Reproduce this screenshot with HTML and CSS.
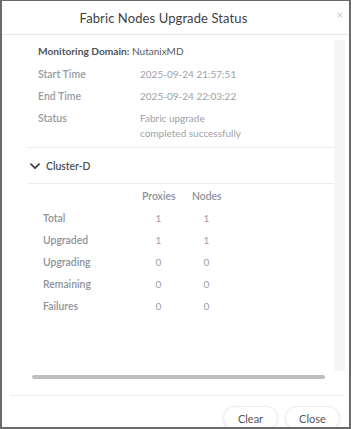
FILE: index.html
```html
<!DOCTYPE html>
<html>
<head>
<meta charset="utf-8">
<link rel="stylesheet" href="styles.css">
</head>
<body>
<div class="modal">
  <div class="header">
    <div class="title">Fabric Nodes Upgrade Status</div>
    <div class="close-x">×</div>
  </div>
  <div class="body">
    <div class="scroller">
      <div class="content">
        <div class="info">
          <div class="domain"><b>Monitoring Domain:</b> NutanixMD</div>
          <div class="row"><span class="lbl">Start Time</span><span class="val">2025-09-24 21:57:51</span></div>
          <div class="row"><span class="lbl">End Time</span><span class="val">2025-09-24 22:03:22</span></div>
          <div class="row"><span class="lbl">Status</span><span class="val">Fabric upgrade<br>completed successfully</span></div>
        </div>
        <div class="cluster">
          <svg class="chev" width="10" height="7" viewBox="0 0 10 7"><path d="M1 1.2 L5 5.2 L9 1.2" fill="none" stroke="#444" stroke-width="1.8" stroke-linecap="round" stroke-linejoin="round"/></svg>
          <span>Cluster-D</span>
        </div>
        <div class="grid">
          <div></div><div class="h">Proxies</div><div class="h">Nodes</div>
          <div class="l">Total</div><div class="n">1</div><div class="n">1</div>
          <div class="l">Upgraded</div><div class="n">1</div><div class="n">1</div>
          <div class="l">Upgrading</div><div class="n">0</div><div class="n">0</div>
          <div class="l">Remaining</div><div class="n">0</div><div class="n">0</div>
          <div class="l">Failures</div><div class="n">0</div><div class="n">0</div>
        </div>
      </div>
      <div class="vtrack"></div>
    </div>
    <div class="hbar"><div class="thumb"></div></div>
  </div>
  <div class="footer">
    <button class="btn">Clear</button>
    <button class="btn">Close</button>
  </div>
</div>
</body>
</html>
```

FILE: styles.css
```css
* { box-sizing: border-box; }
html, body { margin: 0; padding: 0; background: #fff; }
body { font-family: "Lato", "Open Sans", sans-serif; }
.modal {
  width: 351px;
  height: 429px;
  border: 2px solid #6a6a6a;
  border-top-width: 1px;
  display: flex;
  flex-direction: column;
  background: #fff;
  overflow: hidden;
}
.header {
  height: 34px;
  border-bottom: 1px solid #e8e8e8;
  display: flex;
  align-items: center;
  justify-content: center;
  position: relative;
  flex: none;
}
.title {
  font-size: 13px;
  color: #3f3f3f;
  letter-spacing: 0.1px;
  margin-right: 24px;
  margin-top: 1px;
}
.close-x {
  position: absolute;
  right: 6px;
  top: 7px;
  font-size: 11px;
  color: #c8c8c8;
}
.body {
  padding: 5px 4px 0 26px;
  flex: none;
}
.scroller {
  display: flex;
  height: 331px;
}
.content {
  flex: 1;
  background: #fff;
}
.vtrack {
  width: 11px;
  background: #f5f5f5;
}
.info {
  padding: 4px 0 0 10px;
  height: 108px;
  border-bottom: 1px solid #ececec;
}
.domain {
  color: #555a60;
  height: 22.5px;
  line-height: 15px;
  font-size: 10px;
}
.domain b { font-weight: 700; color: #50545a; font-size: 10.2px; }
.row {
  display: flex;
  min-height: 22.3px;
  line-height: 15px;
}
.lbl {
  width: 102px;
  color: #979ba3;
  font-weight: 600;
  font-size: 10.5px;
}
.val {
  color: #9ea2a9;
  font-size: 10px;
}
.cluster {
  height: 36px;
  border-bottom: 1px solid #ececec;
  display: flex;
  align-items: center;
  padding-left: 2px;
  gap: 6px;
  font-size: 10.4px;
  color: #4a4e54;
  font-weight: 600;
}
.chev { margin-top: 1px; }
.grid {
  display: grid;
  grid-template-columns: 82px 33px 29px;
  column-gap: 17px;
  grid-auto-rows: 22px;
  padding: 1px 0 0 15px;
  font-size: 10.4px;
  align-items: center;
}
.h { color: #8e929b; text-align: center; font-weight: 600; }
.l { color: #8e929b; font-weight: 600; }
.n { color: #9a9ea5; text-align: center; font-size: 10px; }
.hbar {
  height: 13px;
  padding: 4px 20px 0 4px;
}
.thumb {
  height: 4px;
  border-radius: 2px;
  background: #bdbdbd;
}
.footer {
  margin: 11px 6px 0 8px;
  border-top: 1px solid #eeeeee;
  display: flex;
  justify-content: flex-end;
  gap: 7px;
  padding: 10px 3px 0 0;
  flex: 1;
}
.btn {
  font-family: inherit;
  font-size: 11px;
  color: #555;
  background: #fff;
  border: 1px solid #ececec;
  border-radius: 12px;
  height: 24px;
  padding: 0;
  width: 55px;
  box-shadow: 0 1px 3px rgba(0,0,0,0.08);
}
```
